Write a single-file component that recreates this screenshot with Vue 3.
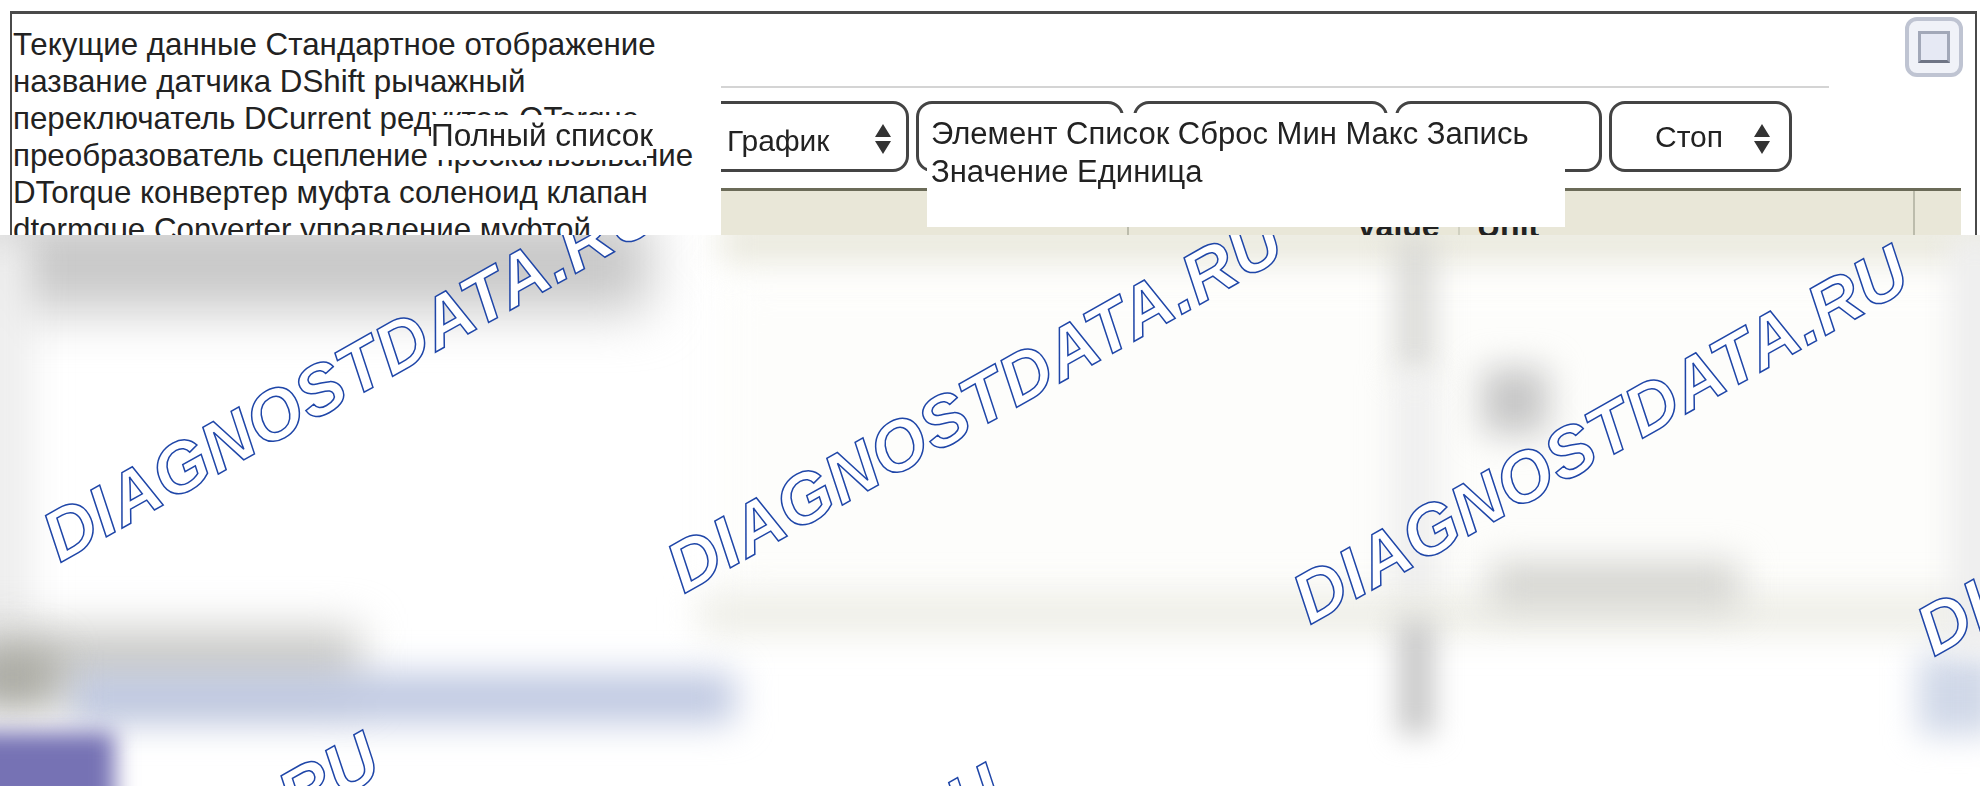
<script setup>
const lines = [
  'Текущие данные Стандартное отображение',
  'название датчика DShift рычажный',
  'переключатель DCurrent редуктор QTorque',
  'преобразователь сцепление проскальзывание',
  'DTorque конвертер муфта соленоид клапан',
  'dtormque Converter управление муфтой',
]
const blobs = [
  { x: 720, y: 280, w: 1300, h: 320, c: '#fdfdfb', b: 24 },
  { x: -30, y: 215, w: 680, h: 96, c: '#c8c8c8', b: 26 },
  { x: -30, y: 235, w: 62, h: 400, c: '#eeeeee', b: 18 },
  { x: 720, y: 222, w: 1290, h: 40, c: '#e9e8dc', b: 16 },
  { x: 1398, y: 235, w: 34, h: 140, c: '#d6d6d3', b: 16 },
  { x: 1392, y: 375, w: 46, h: 240, c: '#eeeeee', b: 16 },
  { x: 1482, y: 368, w: 66, h: 66, c: '#c6c6c6', b: 17 },
  { x: 700, y: 596, w: 1300, h: 36, c: '#ebebe3', b: 18 },
  { x: 1490, y: 562, w: 250, h: 46, c: '#d4d4d0', b: 18 },
  { x: 1398, y: 620, w: 36, h: 115, c: '#c8c8c8', b: 14 },
  { x: 1918, y: 655, w: 80, h: 80, c: '#d0d8e8', b: 16 },
  { x: 1950, y: 235, w: 50, h: 415, c: '#eeeeee', b: 14 },
  { x: -30, y: 628, w: 390, h: 68, c: '#cbcbc8', b: 22 },
  { x: 70, y: 674, w: 665, h: 48, c: '#bcc6e0', b: 18 },
  { x: -30, y: 650, w: 85, h: 55, c: '#a8a8a0', b: 20 },
  { x: -30, y: 732, w: 145, h: 80, c: '#7672b4', b: 11 },
]
const marks = [
  [60, 563], [684, 594], [1310, 625], [1934, 657], [-219, 1112], [404, 1144],
]
const blobStyle = (o) => ({
  left: o.x + 'px', top: o.y + 'px', width: o.w + 'px', height: o.h + 'px',
  background: o.c, filter: `blur(${o.b}px)`,
})
</script>

<template>
  <div class="page">
    <div class="backdrop">
      <div v-for="(o, i) in blobs" :key="i" class="blob" :style="blobStyle(o)"></div>
    </div>
    <svg class="marks" width="1980" height="786">
      <text
        v-for="(m, i) in marks"
        :key="i"
        :x="m[0]"
        :y="m[1]"
        :transform="`rotate(-29.3 ${m[0]} ${m[1]})`"
      >DIAGNOSTDATA.RU</text>
    </svg>

    <header class="top">
      <div class="window">
        <div class="left">
          <div v-for="l in lines" :key="l" class="line">{{ l }}</div>
        </div>
        <div class="right">
          <div class="rule"></div>
          <div class="toolbar">
            <div class="btn first">
              <span class="label">График</span>
              <svg class="updown" width="18" height="30" viewBox="0 0 18 30"><path d="M9 0 17 13H1ZM1 17H17L9 30Z" /></svg>
            </div>
            <div class="btn second"></div>
            <div class="btn third"></div>
            <div class="btn fourth"></div>
            <div class="btn stop">
              <span>Стоп</span>
              <svg class="updown" width="18" height="30" viewBox="0 0 18 30"><path d="M9 0 17 13H1ZM1 17H17L9 30Z" /></svg>
            </div>
          </div>
          <div class="thead">
            <span class="hcell c1"></span>
            <span class="hcell c2"><b>Value</b></span>
            <span class="hcell c3"><b>Unit</b></span>
            <span class="hcell c4"></span>
          </div>
        </div>
      </div>
      <div class="tip full">Полный список</div>
      <div class="tip cols">Элемент Список Сброс Мин Макс Запись<br />Значение Единица</div>
      <div class="maxbtn"><i></i></div>
    </header>
  </div>
</template>

<style scoped>
.page {
  position: relative;
  width: 1980px;
  height: 786px;
  overflow: hidden;
  background: #fff;
  font-family: "Liberation Sans", Arial, sans-serif;
  color: #222;
}
.backdrop {
  position: absolute;
  inset: 0;
}
.blob {
  position: absolute;
}
.marks {
  position: absolute;
  left: 0;
  top: 0;
}
.marks text {
  font-family: "Liberation Sans", Arial, sans-serif;
  font-weight: 700;
  font-style: italic;
  font-size: 70.5px;
  letter-spacing: 1px;
  fill: #fff;
  stroke: #1f46a8;
  stroke-width: 1.5px;
}
.top {
  position: absolute;
  left: 0;
  top: 0;
  width: 1980px;
  height: 235px;
  background: #fff;
  overflow: hidden;
  padding: 11px 3px 0 10px;
  box-sizing: border-box;
}
.window {
  display: grid;
  grid-template-columns: 709px 1fr;
  height: 240px;
  border: 2px solid #4a4a4a;
  border-top-width: 3px;
  border-bottom: 0;
  box-sizing: border-box;
  filter: blur(0.5px);
}
.left {
  padding: 12px 0 0 1px;
  background: #fff;
  z-index: 1;
}
.line {
  font-size: 31.3px;
  line-height: 37px;
  white-space: nowrap;
}
.right {
  overflow: hidden;
  display: flex;
  flex-direction: column;
  padding-right: 12px;
}
.rule {
  margin-top: 72px;
  width: 1108px;
  height: 2px;
  background: #d4d4d4;
  flex: none;
}
.toolbar {
  display: flex;
  gap: 7px;
  margin: 13px 0 0 -21px;
  height: 71px;
  flex: none;
}
.btn {
  box-sizing: border-box;
  height: 71px;
  border: 3px solid #444;
  border-radius: 16px;
  display: flex;
  align-items: center;
  font-size: 30px;
  flex: none;
}
.first { width: 209px; padding-left: 24px; gap: 44px; }
.label { padding-top: 9px; }
.second { width: 208px; }
.third { width: 255px; margin-left: 2px; }
.fourth { width: 207px; }
.stop { width: 183px; padding-left: 43px; gap: 30px; }
.updown { fill: #333; flex: none; margin-top: 4px; }
.thead {
  margin-top: 16px;
  flex: 1;
  display: grid;
  grid-template-columns: 408px 331px 455px 46px;
  width: 1240px;
  background: #e9e7d8;
  border-top: 3px solid #6b6b58;
  box-sizing: border-box;
  align-items: start;
}
.hcell {
  height: 100%;
  box-sizing: border-box;
  border-right: 2px solid #bcbcac;
  font-size: 32px;
  padding-top: 20px;
  line-height: 30px;
}
.c2 { padding-left: 227px; white-space: nowrap; border-right-color: #d0d0c0; }
.c3 { padding-left: 17px; }
.c4 { border-right: 0; }
.tip {
  position: absolute;
  background: #fff;
  font-size: 31.5px;
  line-height: 37px;
  white-space: nowrap;
  filter: blur(0.4px);
}
.full {
  left: 431px;
  top: 115px;
  width: 216px;
  height: 45px;
  padding-top: 2px;
  box-sizing: border-box;
}
.cols {
  left: 927px;
  top: 113px;
  width: 638px;
  height: 114px;
  padding: 2px 0 0 4px;
  box-sizing: border-box;
  font-size: 31px;
  line-height: 38px;
}
.maxbtn {
  position: absolute;
  left: 1905px;
  top: 17px;
  width: 58px;
  height: 60px;
  box-sizing: border-box;
  border: 4px solid #bfc4d2;
  border-radius: 12px;
  background: #f0f2f8;
  display: flex;
  align-items: center;
  justify-content: center;
  filter: blur(0.6px);
}
.maxbtn i {
  display: block;
  width: 32px;
  height: 32px;
  box-sizing: border-box;
  border: 3px solid #a2a8b8;
  border-bottom-color: #6f7585;
  background: #e6e9f4;
}
</style>
